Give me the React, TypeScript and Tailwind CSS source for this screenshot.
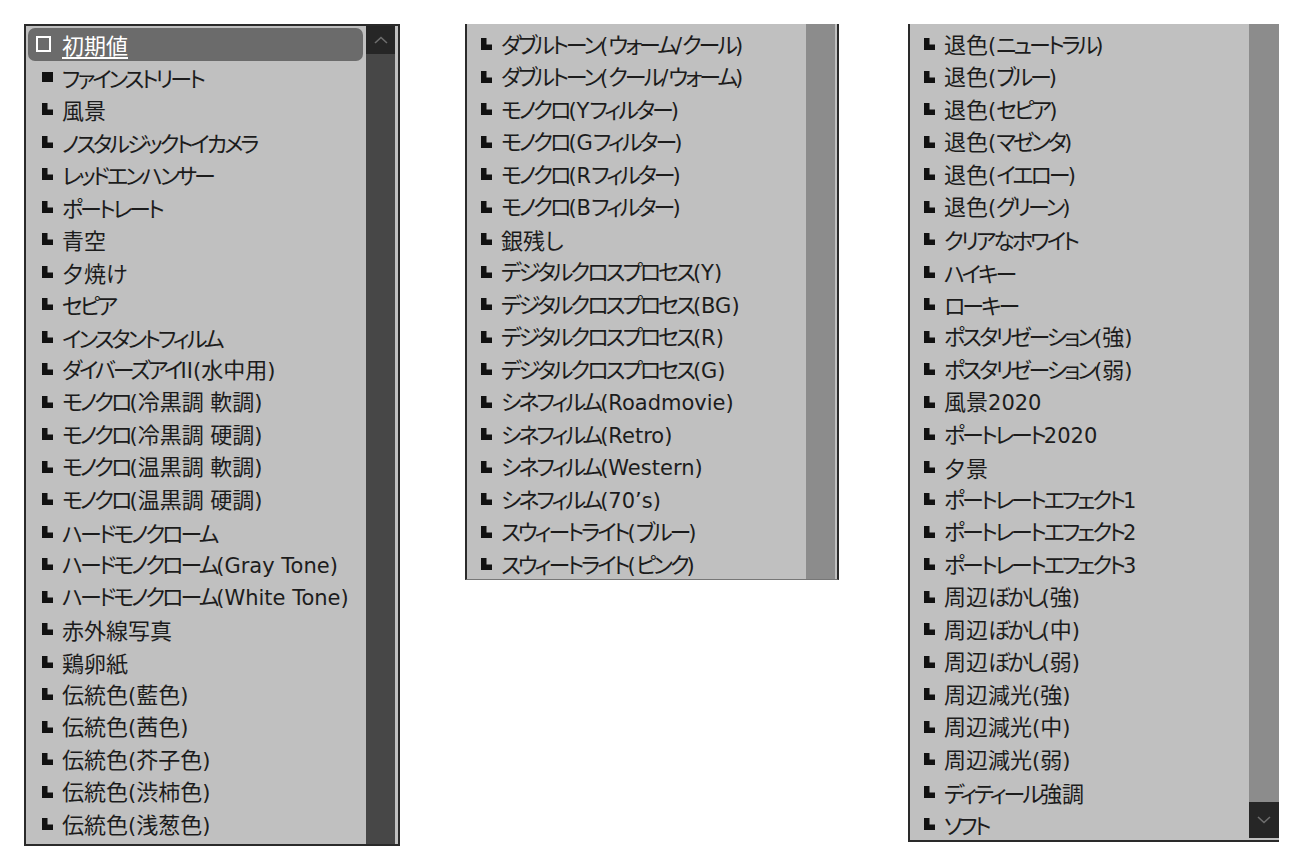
const col1 = [
  "ファインストリート",
  "風景",
  "ノスタルジックトイカメラ",
  "レッドエンハンサー",
  "ポートレート",
  "青空",
  "夕焼け",
  "セピア",
  "インスタントフィルム",
  "ダイバーズアイII(水中用)",
  "モノクロ(冷黒調 軟調)",
  "モノクロ(冷黒調 硬調)",
  "モノクロ(温黒調 軟調)",
  "モノクロ(温黒調 硬調)",
  "ハードモノクローム",
  "ハードモノクローム(Gray Tone)",
  "ハードモノクローム(White Tone)",
  "赤外線写真",
  "鶏卵紙",
  "伝統色(藍色)",
  "伝統色(茜色)",
  "伝統色(芥子色)",
  "伝統色(渋柿色)",
  "伝統色(浅葱色)",
];

const col2 = [
  "ダブルトーン(ウォーム/クール)",
  "ダブルトーン(クール/ウォーム)",
  "モノクロ(Yフィルター)",
  "モノクロ(Gフィルター)",
  "モノクロ(Rフィルター)",
  "モノクロ(Bフィルター)",
  "銀残し",
  "デジタルクロスプロセス(Y)",
  "デジタルクロスプロセス(BG)",
  "デジタルクロスプロセス(R)",
  "デジタルクロスプロセス(G)",
  "シネフィルム(Roadmovie)",
  "シネフィルム(Retro)",
  "シネフィルム(Western)",
  "シネフィルム(70’s)",
  "スウィートライト(ブルー)",
  "スウィートライト(ピンク)",
];

const col3 = [
  "退色(ニュートラル)",
  "退色(ブルー)",
  "退色(セピア)",
  "退色(マゼンタ)",
  "退色(イエロー)",
  "退色(グリーン)",
  "クリアなホワイト",
  "ハイキー",
  "ローキー",
  "ポスタリゼーション(強)",
  "ポスタリゼーション(弱)",
  "風景2020",
  "ポートレート2020",
  "夕景",
  "ポートレートエフェクト1",
  "ポートレートエフェクト2",
  "ポートレートエフェクト3",
  "周辺ぼかし(強)",
  "周辺ぼかし(中)",
  "周辺ぼかし(弱)",
  "周辺減光(強)",
  "周辺減光(中)",
  "周辺減光(弱)",
  "ディティール強調",
  "ソフト",
];

// the UI font has narrow kana and a wide latin face, so split runs by script
type Run = { kind: "latin" | "kana" | "kanji"; text: string };

const kindOf = (ch: string): Run["kind"] => {
  if (/[\u0000-\u024f\u2019]/.test(ch)) return "latin";
  if (/[\u3040-\u30ff]/.test(ch)) return "kana";
  return "kanji";
};

const splitRuns = (text: string): Run[] => {
  const runs: Run[] = [];
  for (const ch of text) {
    const kind = kindOf(ch);
    const last = runs[runs.length - 1];
    if (last && last.kind === kind) last.text += ch;
    else runs.push({ kind, text: ch });
  }
  return runs;
};

const Label = ({ text }: { text: string }) => (
  <span className="whitespace-nowrap">
    {splitRuns(text).map((run, i) =>
      run.kind === "latin" ? (
        <span key={i} className="font-['DejaVu_Sans',sans-serif] text-[21px]">
          {run.text}
        </span>
      ) : run.kind === "kana" ? (
        <span key={i} className="tracking-[-3px]">
          {run.text}
        </span>
      ) : (
        <span key={i}>{run.text}</span>
      )
    )}
  </span>
);

const CornerBullet = () => (
  <svg width="11" height="12" viewBox="0 0 11 12" className="shrink-0">
    <path d="M0 0H5.5V6.5H11V12H0Z" fill="#111" />
  </svg>
);

const Row = ({ label, square = false }: { label: string; square?: boolean }) => (
  <div className="flex h-[32.5px] items-center">
    <div className="flex w-[34px] justify-end pr-[9px]">
      {square ? <div className="h-[10px] w-[11px] bg-[#111]" /> : <CornerBullet />}
    </div>
    <Label text={label} />
  </div>
);

const Chevron = ({ up }: { up?: boolean }) => (
  <svg width="14" height="8" viewBox="0 0 14 8">
    <path
      d={up ? "M1 7L7 1.5L13 7" : "M1 1L7 6.5L13 1"}
      fill="none"
      stroke="#6e6e6e"
      strokeWidth="1.6"
    />
  </svg>
);

const App = () => {
  return (
    <div className="flex min-h-[867px] items-start bg-white pl-[24px] pt-[24px] font-['Noto_Sans_CJK_JP','Noto_Sans',sans-serif] text-[22px] leading-none text-[#1c1c1c] [font-feature-settings:'palt']">
      {/* left list, first item selected */}
      <div className="flex h-[822px] w-[376px] border-2 border-[#2a2a2a] bg-[#c0c0c0] pr-[3px]">
        <div className="flex-1 pt-[2px] pl-[2px]">
          <div className="mr-[3px] flex h-[32.5px] items-center rounded-[7px] bg-[#6b6b6b] text-white">
            <div className="flex w-[34px] justify-end pr-[11px]">
              <div className="h-[16px] w-[15px] border-2 border-white" />
            </div>
            <span className="underline underline-offset-[3px]">初期値</span>
          </div>
          <Row label={col1[0]} square />
          {col1.slice(1).map(label => (
            <Row key={label} label={label} />
          ))}
        </div>
        <div className="flex w-[29px] flex-col bg-[#474747]">
          <div className="flex h-[28px] items-center justify-center bg-[#262626]">
            <Chevron up />
          </div>
        </div>
      </div>

      {/* middle list */}
      <div className="ml-[65px] flex h-[556px] w-[374px] border-x-2 border-b border-[#2a2a2a] border-b-[#777] bg-[#c0c0c0] pr-[2px]">
        <div className="flex-1 pt-[4px]">
          {col2.map(label => (
            <Row key={label} label={label} />
          ))}
        </div>
        <div className="w-[29px] bg-[#8c8c8c]" />
      </div>

      {/* right list */}
      <div className="ml-[69px] flex h-[818px] w-[371px] border-l-2 border-b-2 border-[#2a2a2a] bg-[#c0c0c0] pb-[2px]">
        <div className="flex-1 pt-[4px]">
          {col3.map(label => (
            <Row key={label} label={label} />
          ))}
        </div>
        <div className="flex w-[30px] flex-col bg-[#8c8c8c]">
          <div className="flex-1" />
          <div className="flex h-[36px] items-center justify-center bg-[#262626]">
            <Chevron />
          </div>
        </div>
      </div>
    </div>
  );
};

export default App;
